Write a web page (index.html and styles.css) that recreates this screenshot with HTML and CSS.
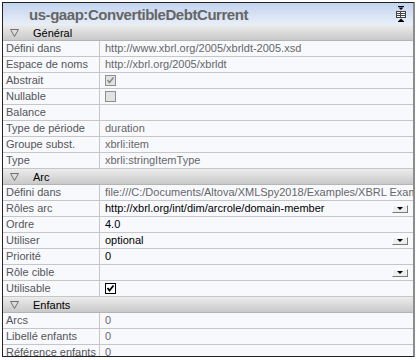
FILE: index.html
```html
<!DOCTYPE html>
<html>
<head>
<meta charset="utf-8">
<link rel="stylesheet" href="styles.css">
</head>
<body>
<div class="frame">
  <div class="title">
    <span class="title-text">us-gaap:ConvertibleDebtCurrent</span>
    <svg class="title-icon" width="10" height="17" viewBox="0 0 10 17">
      <line x1="2" y1="0.5" x2="8" y2="0.5" stroke="#000"/>
      <polygon points="2.5,1.5 7.5,1.5 5,4" fill="#000"/>
      <rect x="0.5" y="5.5" width="9" height="6" fill="#fff" stroke="#444"/>
      <line x1="1" y1="7.5" x2="9" y2="7.5" stroke="#444"/>
      <line x1="1" y1="9.5" x2="9" y2="9.5" stroke="#444"/>
      <line x1="4.5" y1="6" x2="4.5" y2="11" stroke="#444"/>
      <polygon points="2.5,15 7.5,15 5,12.5" fill="#000"/>
      <line x1="2" y1="15.5" x2="8" y2="15.5" stroke="#000"/>
    </svg>
  </div>

  <div class="section"><svg class="tri" width="9" height="8" viewBox="0 0 9 8"><polygon points="0.5,0.5 8.5,0.5 4.5,7.5" fill="none" stroke="#707070"/></svg><span>Général</span></div>
  <div class="row"><div class="label">Défini dans</div><div class="value ro">http://www.xbrl.org/2005/xbrldt-2005.xsd</div></div>
  <div class="row"><div class="label">Espace de noms</div><div class="value ro">http://xbrl.org/2005/xbrldt</div></div>
  <div class="row"><div class="label">Abstrait</div><div class="value"><span class="cb cb-dis"><svg width="9" height="9" viewBox="0 0 9 9"><polyline points="1.5,4 3.5,6.5 7.5,1.5" fill="none" stroke="#8a8a8a" stroke-width="1.6"/></svg></span></div></div>
  <div class="row"><div class="label">Nullable</div><div class="value"><span class="cb cb-dis"></span></div></div>
  <div class="row"><div class="label">Balance</div><div class="value ro"></div></div>
  <div class="row"><div class="label">Type de période</div><div class="value ro">duration</div></div>
  <div class="row"><div class="label">Groupe subst.</div><div class="value ro">xbrli:item</div></div>
  <div class="row"><div class="label">Type</div><div class="value ro">xbrli:stringItemType</div></div>

  <div class="section"><svg class="tri" width="9" height="8" viewBox="0 0 9 8"><polygon points="0.5,0.5 8.5,0.5 4.5,7.5" fill="none" stroke="#707070"/></svg><span>Arc</span></div>
  <div class="row"><div class="label">Défini dans</div><div class="value ro">file:///C:/Documents/Altova/XMLSpy2018/Examples/XBRL Examples/Nanonull/nanonull.xsd</div></div>
  <div class="row"><div class="label">Rôles arc</div><div class="value ed drop"><span>http://xbrl.org/int/dim/arcrole/domain-member</span><span class="dd"></span></div></div>
  <div class="row"><div class="label">Ordre</div><div class="value ed">4.0</div></div>
  <div class="row"><div class="label">Utiliser</div><div class="value ed drop"><span>optional</span><span class="dd"></span></div></div>
  <div class="row"><div class="label">Priorité</div><div class="value ed">0</div></div>
  <div class="row"><div class="label">Rôle cible</div><div class="value ed drop"><span></span><span class="dd"></span></div></div>
  <div class="row"><div class="label">Utilisable</div><div class="value"><span class="cb cb-on"><svg width="9" height="9" viewBox="0 0 9 9"><polyline points="1.5,4 3.5,6.5 7.5,1.5" fill="none" stroke="#000" stroke-width="1.8"/></svg></span></div></div>

  <div class="section"><svg class="tri" width="9" height="8" viewBox="0 0 9 8"><polygon points="0.5,0.5 8.5,0.5 4.5,7.5" fill="none" stroke="#707070"/></svg><span>Enfants</span></div>
  <div class="row"><div class="label">Arcs</div><div class="value ro">0</div></div>
  <div class="row"><div class="label">Libellé enfants</div><div class="value ro">0</div></div>
  <div class="row"><div class="label">Référence enfants</div><div class="value ro">0</div></div>
</div>
</body>
</html>
```

FILE: styles.css
```css
html, body {
  margin: 0;
  padding: 0;
  background: #ffffff;
}

body {
  font-family: "Liberation Sans", Arial, sans-serif;
  font-size: 11px;
  color: #5a5a5a;
}

.frame {
  margin: 2px 0 0 2px;
  width: 410px;
  height: 353px;
  border-left: 1px solid #222;
  border-top: 1px solid #222;
  border-bottom: 1px solid #222;
  border-right: 2px solid #8c8c8c;
  overflow: hidden;
  background: #f7f9fd;
}

.title {
  height: 22px;
  display: flex;
  align-items: center;
  justify-content: space-between;
  padding: 0 7px 0 26px;
  background: linear-gradient(#c2d4ee, #e9eff9);
}

.title-text {
  font-size: 15px;
  color: #666;
  font-weight: bold;
  letter-spacing: -0.45px;
  white-space: nowrap;
}

.title-icon {
  display: block;
  margin-top: 1px;
}

.section {
  height: 15px;
  display: flex;
  align-items: center;
  border-bottom: 1px solid #b4b4b4;
  background: linear-gradient(#ececec, #c9c9c9);
  color: #000;
}

.tri {
  display: block;
  margin: 0 14px 0 7px;
}

.row {
  display: grid;
  grid-template-columns: 97px 1fr;
  height: 15px;
  border-bottom: 1px solid #c6c6c6;
  line-height: 15px;
}

.label {
  padding-left: 3px;
  border-right: 1px solid #c6c6c6;
  white-space: nowrap;
  overflow: hidden;
  color: #555;
}

.value {
  padding-left: 5px;
  white-space: nowrap;
  overflow: hidden;
  display: flex;
  align-items: center;
}

.ro {
  color: #676767;
}

.ed {
  color: #000;
}

.drop {
  justify-content: space-between;
  padding-right: 5px;
}

.dd {
  width: 16px;
  height: 8px;
  box-sizing: border-box;
  border-top: 1px solid #fff;
  border-left: 1px solid #fff;
  border-right: 1px solid #7a7a7a;
  border-bottom: 1px solid #7a7a7a;
  background: #eeeeee;
  display: flex;
  align-items: center;
  justify-content: center;
}

.dd::after {
  content: "";
  width: 0;
  height: 0;
  border-left: 3px solid transparent;
  border-right: 3px solid transparent;
  border-top: 3px solid #000;
}

.cb {
  width: 11px;
  height: 11px;
  box-sizing: border-box;
  display: flex;
  align-items: center;
  justify-content: center;
  margin-top: -1px;
}

.cb svg {
  display: block;
}

.cb-dis {
  border: 1px solid #8f8f8f;
  background: #e2e2e2;
}

.cb-on {
  border: 1px solid #000;
  background: #fff;
}
```
